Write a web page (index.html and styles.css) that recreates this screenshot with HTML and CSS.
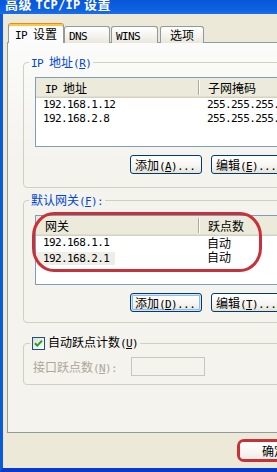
FILE: index.html
```html
<!DOCTYPE html>
<html>
<head>
<meta charset="utf-8">
<link rel="stylesheet" href="styles.css">
</head>
<body>
<div class="window">
  <div class="titlebar"><span class="title">高级 <span class="tm">TCP/IP</span> 设置</span></div>
  <div class="frame">
    <div class="tabs">
      <div class="tab active"><span class="m">IP </span>设置</div>
      <div class="tab t-dns"><span class="m">DNS</span></div>
      <div class="tab t-wins"><span class="m">WINS</span></div>
      <div class="tab t-opt">选项</div>
    </div>
    <div class="panel">
      <fieldset class="group g1">
        <legend><span class="m">IP </span>地址<span class="m">(<u>R</u>)</span></legend>
        <div class="list">
          <div class="lhead">
            <div class="hc1"><span class="m">IP </span>地址</div>
            <div class="sep"></div>
            <div class="hc2">子网掩码</div>
          </div>
          <div class="row"><div class="rc1 m">192.168.1.12</div><div class="rc2 m">255.255.255.0</div></div>
          <div class="row"><div class="rc1 m">192.168.2.8</div><div class="rc2 m">255.255.255.0</div></div>
        </div>
        <div class="btns">
          <button class="btn">添加<span class="m">(<u>A</u>)...</span></button>
          <button class="btn">编辑<span class="m">(<u>E</u>)...</span></button>
        </div>
      </fieldset>

      <fieldset class="group g2">
        <legend>默认网关<span class="m">(<u>F</u>):</span></legend>
        <div class="listwrap">
          <div class="list">
            <div class="lhead">
              <div class="hc1">网关</div>
              <div class="sep"></div>
              <div class="hc2">跃点数</div>
            </div>
            <div class="row"><div class="rc1 m">192.168.1.1</div><div class="rc2">自动</div></div>
            <div class="row"><div class="rc1"><span class="sel m">192.168.2.1</span></div><div class="rc2">自动</div></div>
          </div>
          <div class="mark"></div>
        </div>
        <div class="btns">
          <button class="btn focus">添加<span class="m">(<u>D</u>)...</span></button>
          <button class="btn">编辑<span class="m">(<u>T</u>)...</span></button>
        </div>
      </fieldset>

      <fieldset class="group g3">
        <legend><span class="chk"><svg width="9" height="9" viewBox="0 0 9 9"><path d="M1 4.2 L3.3 6.6 L8 1.6" fill="none" stroke="#21a121" stroke-width="2"/></svg></span><span class="chklabel">自动跃点计数<span class="m">(<u>U</u>)</span></span></legend>
        <div class="metric">
          <span class="mlabel">接口跃点数<span class="m">(<u>N</u>):</span></span>
          <span class="input"></span>
        </div>
      </fieldset>
    </div>
    <div class="okrow">
      <span class="ring"><button class="okbtn">确定</button></span>
    </div>
  </div>
</div>
</body>
</html>
```

FILE: styles.css
```css
* { box-sizing: border-box; }
html, body { margin: 0; padding: 0; }
body {
  width: 277px;
  height: 472px;
  overflow: hidden;
  background: #ece9d8;
  font-family: "Noto Sans CJK SC", "Liberation Sans", sans-serif;
  font-size: 12px;
  color: #000;
}
.m {
  font-family: "DejaVu Sans Mono", "Liberation Mono", monospace;
  font-size: 11px;
  letter-spacing: -0.6px;
}
u { text-decoration: underline; text-underline-offset: 1px; }

.window {
  width: 340px;
  height: 472px;
  display: flex;
  flex-direction: column;
}
.titlebar {
  height: 14px;
  flex: none;
  overflow: hidden;
  background: linear-gradient(#0a56d8, #0d62e4 70%, #1b6fea);
  padding-left: 5px;
}
.title {
  display: block;
  margin-top: -4px;
  color: #fff;
  font-weight: bold;
  font-size: 13px;
  line-height: 15px;
  letter-spacing: 0.5px;
}
.tm {
  font-family: "DejaVu Sans Mono", monospace;
  font-size: 12px;
  font-weight: bold;
  letter-spacing: 0.3px;
}
.frame {
  flex: 1;
  display: flex;
  flex-direction: column;
  background: #ece9d8;
  border-left: 3px solid #0b5ad8;
  border-bottom: 4px solid #0a3acb;
}

/* Tabs */
.tabs {
  display: flex;
  align-items: flex-end;
  height: 20px;
  margin: 9px 0 -1px 5px;
  position: relative;
  z-index: 1;
}
.tab {
  height: 17px;
  border: 1px solid #919b9c;
  border-bottom: none;
  border-radius: 3px 3px 0 0;
  background: linear-gradient(#ffffff, #f3f2ed 60%, #e8e6dc);
  line-height: 16px;
  padding-left: 4px;
  white-space: nowrap;
}
.tab.active {
  width: 56px;
  height: 20px;
  padding-left: 6px;
  line-height: 18px;
  background: #fcfcfe;
  border-top: 1px solid #e68b2c;
  box-shadow: inset 0 2px 0 #ffc83c;
  padding-top: 1px;
}
.t-dns { width: 46px; }
.t-wins { width: 47px; margin-left: 1px; }
.t-opt { width: 44px; margin-left: 2px; padding-left: 9px; }

/* Panel */
.panel {
  height: 391px;
  width: 330px;
  flex: none;
  margin-left: 4px;
  border: 1px solid #919b9c;
  background: linear-gradient(#fbfbf9, #f4f3ee 30%);
  padding: 12px 0 0 15px;
  display: flex;
  flex-direction: column;
  align-items: flex-start;
}

.group {
  width: 300px;
  margin: 0;
  padding: 8px 11px 13px 11px;
  border: 1px solid #d0d0bf;
  border-radius: 4px;
  min-inline-size: 0;
}
.group legend {
  margin-left: -6px;
  padding: 0 2px;
  line-height: 14px;
  height: 14px;
  color: #0046d5;
}
.g2 { margin-top: 5px; padding-bottom: 10px; }
.g3 { margin-top: 13px; padding-top: 7px; padding-bottom: 8px; }
.g3 legend {
  margin-left: -5px;
  color: #000;
  display: flex;
  align-items: center;
}

/* List views */
.list {
  width: 260px;
  height: 70px;
  border: 1px solid #7f9db9;
  background: #fff;
}
.lhead {
  display: flex;
  height: 20px;
  background: #ebeadb;
  box-shadow: inset 0 -1px 0 #d6d2c2, inset 0 -2px 0 #e2decd;
  line-height: 20px;
}
.hc1 { width: 162px; padding-left: 9px; }
.sep {
  width: 2px;
  height: 15px;
  margin-top: 2px;
  border-left: 1px solid #aca899;
  border-right: 1px solid #fff;
}
.hc2 { padding-left: 8px; }
.row {
  display: flex;
  height: 14px;
  line-height: 14px;
}
.rc1 { width: 164px; padding-left: 7px; }
.rc2 { padding-left: 7px; }
.row .rc1:has(.sel) { padding-left: 1px; }
.sel {
  display: inline-block;
  height: 13px;
  line-height: 13px;
  padding: 0 6px;
  background: #eeede6;
}
.listwrap { position: relative; }
.mark {
  position: absolute;
  left: -3px;
  top: -3px;
  width: 230px;
  height: 60px;
  border: 3px solid #c8303a;
  border-radius: 22px / 24px;
}

/* Buttons */
.btns {
  display: flex;
  gap: 9px;
  margin: 8px 0 0 95px;
}
.btn {
  width: 72px;
  height: 19px;
  flex: none;
  padding: 0 0 0 4px;
  margin: 0;
  text-align: left;
  border: 1px solid #003c74;
  border-radius: 3px;
  background: linear-gradient(#ffffff, #f7f6f2 55%, #e6e3d6);
  font-family: "Noto Sans CJK SC", sans-serif;
  font-size: 12px;
  line-height: 17px;
  color: #000;
  white-space: nowrap;
}
.btn.focus {
  box-shadow: inset 0 0 0 1px #cee7ff, inset 0 0 0 2px #98b8ea;
}

/* Checkbox */
.chk {
  width: 13px;
  height: 13px;
  border: 1px solid #1c5180;
  background: linear-gradient(135deg, #dcdcd7, #ffffff);
  display: flex;
  align-items: center;
  justify-content: center;
  flex: none;
}
.chklabel { margin-left: 3px; }

.metric {
  display: flex;
  align-items: center;
  margin-left: -2px;
  height: 19px;
}
.mlabel { width: 98px; color: #aca899; }
.input {
  width: 74px;
  height: 19px;
  border: 1px solid #c9c7ba;
  background: #f4f3ee;
}

/* OK */
.okrow {
  margin: 6px 0 0 234px;
  display: flex;
}
.ring {
  display: block;
  height: 23px;
  width: 70px;
  border: 3px solid #c8303a;
  border-radius: 7px;
}
.okbtn {
  width: 100%;
  height: 100%;
  margin: 0;
  border: none;
  border-radius: 4px;
  background: linear-gradient(#ffffff, #f7f6f2 60%, #ecebe6);
  padding: 0 0 0 22px;
  text-align: left;
  font-family: "Noto Sans CJK SC", sans-serif;
  font-size: 12px;
  line-height: 17px;
}
```
